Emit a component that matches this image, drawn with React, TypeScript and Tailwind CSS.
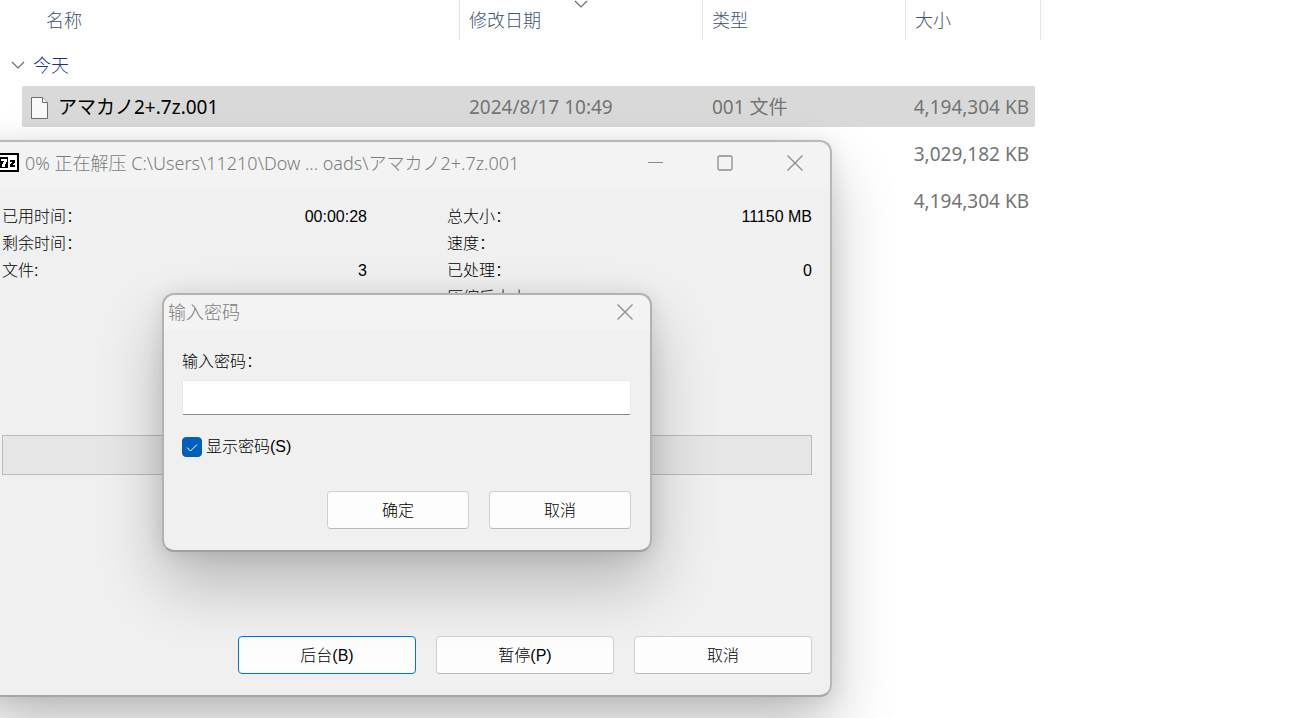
import type { ReactNode } from 'react';
import clsx from 'clsx';

type FileEntry = {
    name?: string;
    modified?: string;
    type?: string;
    size: string;
    selected?: boolean;
};

const files: FileEntry[] = [
    {
        name: 'アマカノ2+.7z.001',
        modified: '2024/8/17 10:49',
        type: '001 文件',
        size: '4,194,304 KB',
        selected: true,
    },
    { size: '3,029,182 KB' },
    { size: '4,194,304 KB' },
];

const leftStats = [
    { label: '已用时间：', value: '00:00:28' },
    { label: '剩余时间：', value: '' },
    { label: '文件:', value: '3' },
];

const rightStats = [
    { label: '总大小：', value: '11150 MB' },
    { label: '速度：', value: '' },
    { label: '已处理：', value: '0' },
    { label: '压缩后大小：', value: '' },
];

function ChevronIcon() {
    return (
        <svg width="14" height="8" viewBox="0 0 14 8" fill="none" stroke="#6b6b6b" strokeWidth="1.2">
            <path d="M1 1l6 6 6-6" />
        </svg>
    );
}

function FileIcon() {
    return (
        <svg width="17" height="22" viewBox="0 0 17 22" fill="#fafafa" stroke="#6e6e6e">
            <path d="M.5.5h11l5 5v16H.5z" />
            <path d="M11.5.5v5h5" />
        </svg>
    );
}

function SevenZipIcon() {
    return (
        <svg width="20" height="19" viewBox="0 0 20 19" shapeRendering="crispEdges">
            <path fill="#000" d="M0 0h20v19H0z" />
            <path fill="#fff" d="M0 2h18v15H0z" />
            <path fill="#000" d="M0 4h9v11H0z" />
            <path fill="#fff" d="M2 6h6v3H7v2H6v3H3v-3h1V9h1V8H2z" />
            <path fill="#000" d="M11 7h5v3h-1v1h-1v1h2v2h-5v-3h1v-1h1V9h-2z" />
        </svg>
    );
}

function CloseIcon() {
    return (
        <svg width="16" height="16" viewBox="0 0 16 16" stroke="#8c8c8c" strokeWidth="1.3">
            <path d="M.5.5l15 15M15.5.5l-15 15" />
        </svg>
    );
}

function CaptionButton({ label, children }: { label: string; children: ReactNode }) {
    return (
        <button aria-label={label} className="flex h-full w-[70px] items-center justify-center">
            {children}
        </button>
    );
}

function PushButton({ children, className }: { children: ReactNode; className: string }) {
    return (
        <button className={clsx('h-[38px] rounded border bg-[#fdfdfd] pt-0.5 font-light', className)}>
            {children}
        </button>
    );
}

function StatList({ stats }: { stats: { label: string; value: string }[] }) {
    return (
        <dl>
            {stats.map((stat) => (
                <div key={stat.label} className="flex h-[27px] items-center justify-between">
                    <dt>{stat.label}</dt>
                    <dd>{stat.value}</dd>
                </div>
            ))}
        </dl>
    );
}

function FileRow({ file }: { file: FileEntry }) {
    const cell = clsx('flex h-[41px] items-center pt-0.5', file.selected && 'bg-[#d9d9d9]');

    return (
        <tr className="text-[19px] font-normal text-[#747474]">
            <td className="py-[3px]">
                <div className={clsx(cell, 'ml-[22px] gap-[10px] rounded-l-xs pl-[9px] text-black')}>
                    {file.name && <FileIcon />}
                    {file.name}
                </div>
            </td>
            <td className="py-[3px]">
                <div className={clsx(cell, 'pl-[9px]')}>{file.modified}</div>
            </td>
            <td className="py-[3px]">
                <div className={clsx(cell, 'pl-[9px]')}>{file.type}</div>
            </td>
            <td className="py-[3px]">
                <div className={clsx(cell, 'mr-[6px] justify-end rounded-r-xs pr-[6px]')}>{file.size}</div>
            </td>
        </tr>
    );
}

function FileList() {
    return (
        <table className="w-[1041px] table-fixed border-separate border-spacing-0">
            <thead>
                <tr className="h-10 text-left text-[#3d5370] *:border-r *:border-[#e5e5e5] *:font-light">
                    <th className="w-[460px] pl-[46px]">名称</th>
                    <th className="relative w-[243px] pl-[9px]">
                        修改日期
                        <span className="absolute inset-x-0 top-0 flex justify-center">
                            <ChevronIcon />
                        </span>
                    </th>
                    <th className="w-[203px] pl-[9px]">类型</th>
                    <th className="w-[135px] pl-[9px]">大小</th>
                </tr>
            </thead>
            <tbody>
                <tr>
                    <td colSpan={4} className="h-[43px] pt-1.5 pl-[11px] text-[#1e3287]">
                        <button className="flex items-center gap-2">
                            <ChevronIcon />
                            今天
                        </button>
                    </td>
                </tr>
                {files.map((file, idx) => (
                    <FileRow key={idx} file={file} />
                ))}
            </tbody>
        </table>
    );
}

function ExtractWindow() {
    return (
        <section className="absolute top-[140px] -left-[18px] flex h-[557px] w-[850px] flex-col rounded-xl border-2 border-[#b8b8b8] border-b-[#a6a6a6] bg-[#f0f0f0] shadow-[0_32px_64px_rgba(0,0,0,0.24),0_2px_21px_rgba(0,0,0,0.1)]">
            <header className="flex h-[43px] items-center rounded-t-xl bg-[#f3f3f3] pb-0.5 pl-[15px] text-[#7c7c7c]">
                <SevenZipIcon />
                <h1 className="ml-[6px] flex-1 text-lg font-light whitespace-nowrap">
                    0% 正在解压 C:\Users\11210\Dow ... oads\アマカノ2+.7z.001
                </h1>
                <CaptionButton label="最小化">
                    <span className="h-px w-[15px] bg-[#8c8c8c]" />
                </CaptionButton>
                <CaptionButton label="最大化">
                    <svg width="16" height="16" viewBox="0 0 16 16" fill="none" stroke="#8c8c8c" strokeWidth="1.3">
                        <rect x="1" y="1" width="14" height="14" rx="1.5" />
                    </svg>
                </CaptionButton>
                <CaptionButton label="关闭">
                    <CloseIcon />
                </CaptionButton>
            </header>

            <div className="flex flex-1 flex-col px-[18px] pt-[18px] pb-[21px] font-['Liberation_Sans','Noto_Sans_CJK_SC',sans-serif] text-base font-light text-black">
                <div className="grid grid-cols-2 gap-x-20">
                    <StatList stats={leftStats} />
                    <StatList stats={rightStats} />
                </div>

                {/* PROGRESS */}
                <div
                    role="progressbar"
                    aria-label="进度"
                    aria-valuenow={0}
                    className="mt-[124px] h-10 border border-[#bcbcbc] bg-[#e6e6e6]"
                />

                <div className="mt-auto flex justify-end gap-5">
                    <PushButton className="w-[178px] border-[#0078d4]">后台(B)</PushButton>
                    <PushButton className="w-[178px] border-[#d0d0d0] border-b-[#bababa]">暂停(P)</PushButton>
                    <PushButton className="w-[178px] border-[#d0d0d0] border-b-[#bababa]">取消</PushButton>
                </div>
            </div>
        </section>
    );
}

function PasswordDialog() {
    return (
        <section
            role="dialog"
            aria-labelledby="password-title"
            className="absolute top-[293px] left-[162px] flex h-[259px] w-[490px] flex-col rounded-xl border-2 border-[#b2b2b2] border-b-[#a0a0a0] bg-[#f0f0f0] shadow-[0_32px_64px_rgba(0,0,0,0.24),0_2px_21px_rgba(0,0,0,0.1)]"
        >
            <header className="flex h-[35px] items-center justify-between rounded-t-xl bg-[#f3f3f3] pb-0.5 pl-1 text-[#7c7c7c]">
                <h2 id="password-title" className="text-lg font-light">输入密码</h2>
                <button aria-label="关闭" className="flex h-full w-[50px] items-center justify-center">
                    <CloseIcon />
                </button>
            </header>

            <form
                className="flex flex-1 flex-col pt-5 pr-[19px] pb-[21px] pl-[18px] font-['Liberation_Sans','Noto_Sans_CJK_SC',sans-serif] text-base font-light text-black"
                onSubmit={(e) => e.preventDefault()}
            >
                <label htmlFor="password">输入密码：</label>
                <input
                    id="password"
                    type="text"
                    className="mt-1.5 h-[35px] w-full rounded-xs border border-[#e8e8e8] border-b-[#868686] bg-white px-2 outline-none"
                />

                {/* SHOW PASSWORD */}
                <div className="mt-5 flex items-center gap-1">
                    <span className="relative flex size-5">
                        <input
                            id="show-password"
                            type="checkbox"
                            defaultChecked
                            className="peer size-5 appearance-none rounded border border-[#868686] bg-white checked:border-[#005fb8] checked:bg-[#005fb8]"
                        />
                        <svg
                            className="pointer-events-none absolute inset-0 hidden peer-checked:block"
                            viewBox="0 0 20 20"
                            fill="none"
                            stroke="#fff"
                        >
                            <path d="M5 10.5l3.5 3.5L15 7.5" />
                        </svg>
                    </span>
                    <label htmlFor="show-password">显示密码(S)</label>
                </div>

                <div className="mt-auto flex justify-end gap-5">
                    <PushButton className="w-[142px] border-[#d0d0d0] border-b-[#bababa]">确定</PushButton>
                    <PushButton className="w-[142px] border-[#d0d0d0] border-b-[#bababa]">取消</PushButton>
                </div>
            </form>
        </section>
    );
}

export default function App() {
    return (
        <main
            lang="zh-CN"
            className="relative h-screen overflow-hidden bg-white font-['Noto_Sans','Noto_Sans_CJK_SC',sans-serif] text-lg font-light"
        >
            <FileList />
            <ExtractWindow />
            <PasswordDialog />
        </main>
    );
}
